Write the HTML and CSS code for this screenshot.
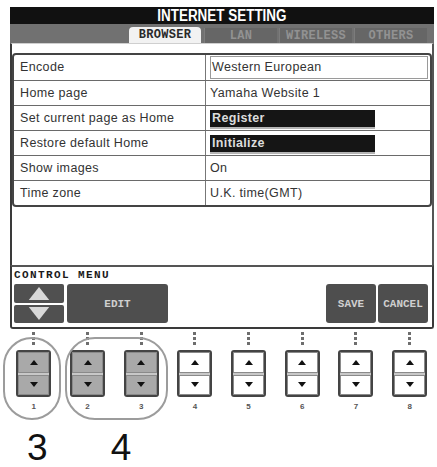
FILE: index.html
```html
<!DOCTYPE html>
<html lang="en">
<head>
    <meta charset="UTF-8">
    <meta name="viewport" content="width=device-width, initial-scale=1.0">
    <title>Internet Setting</title>
    <link rel="stylesheet" href="styles.css">
</head>
<body>
    <div class="screen">
        <div class="title"><span>INTERNET SETTING</span></div>
        <div class="tabs">
            <div class="tab active">BROWSER</div>
            <div class="tab">LAN</div>
            <div class="tab">WIRELESS</div>
            <div class="tab">OTHERS</div>
        </div>
        <div class="content">
            <div class="settings">
                <div class="row">
                    <div class="label">Encode</div>
                    <div class="value"><span class="field">Western European</span></div>
                </div>
                <div class="row">
                    <div class="label">Home page</div>
                    <div class="value">Yamaha Website 1</div>
                </div>
                <div class="row">
                    <div class="label">Set current page as Home</div>
                    <div class="value"><span class="action">Register</span></div>
                </div>
                <div class="row">
                    <div class="label">Restore default Home</div>
                    <div class="value"><span class="action">Initialize</span></div>
                </div>
                <div class="row">
                    <div class="label">Show images</div>
                    <div class="value">On</div>
                </div>
                <div class="row">
                    <div class="label">Time zone</div>
                    <div class="value">U.K. time(GMT)</div>
                </div>
            </div>
        </div>
        <div class="control">
            <div class="control-title">CONTROL MENU</div>
            <div class="control-buttons">
                <div class="updown">
                    <div class="ud-btn">
                        <svg width="22" height="14" viewBox="0 0 22 14"><polygon points="11,0 22,14 0,14" fill="#d8d8d8"/></svg>
                    </div>
                    <div class="ud-btn">
                        <svg width="22" height="14" viewBox="0 0 22 14"><polygon points="0,0 22,0 11,14" fill="#d8d8d8"/></svg>
                    </div>
                </div>
                <div class="cbtn edit">EDIT</div>
                <div class="spacer"></div>
                <div class="cbtn small">SAVE</div>
                <div class="cbtn small">CANCEL</div>
            </div>
        </div>
    </div>

    <div class="panel">
        <div class="oval one"></div>
        <div class="oval two"></div>
        <div class="knobs">
            <div class="knob"><div class="dots"></div><div class="switch on"><div class="half"><i class="tri up"></i></div><div class="half"><i class="tri down"></i></div></div><div class="num">1</div></div>
            <div class="knob"><div class="dots"></div><div class="switch on"><div class="half"><i class="tri up"></i></div><div class="half"><i class="tri down"></i></div></div><div class="num">2</div></div>
            <div class="knob"><div class="dots"></div><div class="switch on"><div class="half"><i class="tri up"></i></div><div class="half"><i class="tri down"></i></div></div><div class="num">3</div></div>
            <div class="knob"><div class="dots"></div><div class="switch"><div class="half"><i class="tri up"></i></div><div class="half"><i class="tri down"></i></div></div><div class="num">4</div></div>
            <div class="knob"><div class="dots"></div><div class="switch"><div class="half"><i class="tri up"></i></div><div class="half"><i class="tri down"></i></div></div><div class="num">5</div></div>
            <div class="knob"><div class="dots"></div><div class="switch"><div class="half"><i class="tri up"></i></div><div class="half"><i class="tri down"></i></div></div><div class="num">6</div></div>
            <div class="knob"><div class="dots"></div><div class="switch"><div class="half"><i class="tri up"></i></div><div class="half"><i class="tri down"></i></div></div><div class="num">7</div></div>
            <div class="knob"><div class="dots"></div><div class="switch"><div class="half"><i class="tri up"></i></div><div class="half"><i class="tri down"></i></div></div><div class="num">8</div></div>
        </div>
        <div class="steps">
            <span class="step first">3</span>
            <span class="step second">4</span>
        </div>
    </div>
</body>
</html>
```

FILE: styles.css
```css
body {
    margin: 0;
    background-color: #ffffff;
    font-family: "Liberation Sans", Arial, sans-serif;
    color: #333333;
}

/* LCD screen */
.screen {
    margin: 7px 0 0 10px;
    width: 424px;
}
.title {
    height: 17px;
    background-color: #111111;
    color: #ffffff;
    text-align: center;
    font-weight: bold;
    font-size: 16px;
    line-height: 18px;
}
.title span {
    display: inline-block;
    transform: scaleX(0.84);
}
.tabs {
    height: 19px;
    background-color: #717171;
    display: flex;
    justify-content: flex-end;
    align-items: flex-end;
    padding-right: 7px;
    gap: 2px;
}
.tab {
    width: 72px;
    height: 15px;
    background-color: #666666;
    color: #929292;
    font-family: "Liberation Mono", monospace;
    font-weight: bold;
    font-size: 12px;
    letter-spacing: 0.3px;
    line-height: 16px;
    text-align: center;
    border-left: 1px solid #7c7c7c;
}
.tab.active {
    background-color: #f2f2f2;
    color: #2a2a2a;
    border-left: none;
    border-radius: 4px 4px 0 0;
    height: 16px;
    margin-right: 1px;
}
.content {
    height: 212px;
    border-left: 2px solid #3a3a3a;
    border-right: 2px solid #555555;
    border-top: 1px solid #cfcfcf;
    padding-top: 9px;
}
.settings {
    border: 2px solid #444444;
    border-radius: 4px;
}
.row {
    display: flex;
    height: 24px;
    border-bottom: 1px solid #6a6a6a;
    font-size: 12.5px;
    letter-spacing: 0.35px;
}
.row:last-child {
    border-bottom: none;
}
.row:first-child {
    height: 25px;
}
.label {
    width: 185px;
    padding-left: 6px;
    line-height: 24px;
    border-right: 1px solid #777777;
}
.value {
    flex: 1;
    padding-left: 4px;
    line-height: 24px;
    display: flex;
    align-items: center;
}
.field {
    flex: 1;
    margin-right: 2px;
    padding-left: 1px;
    height: 21px;
    line-height: 21px;
    border: 1px solid #9a9a9a;
}
.action {
    display: inline-block;
    width: 163px;
    height: 17px;
    line-height: 17px;
    padding-left: 2px;
    background-color: #151515;
    color: #dcdcdc;
    font-weight: bold;
    box-shadow: 0 2px 0 #b5b5b5;
}

/* control menu strip */
.control {
    height: 57px;
    border: 2px solid #3a3a3a;
    border-top: 2px solid #555555;
    border-radius: 0 0 3px 3px;
    padding: 3px 4px 0 2px;
}
.control-title {
    font-family: "Liberation Mono", monospace;
    font-weight: bold;
    font-size: 11px;
    letter-spacing: 1.4px;
    line-height: 11px;
    color: #1a1a1a;
}
.control-buttons {
    display: flex;
    margin-top: 3px;
    height: 39px;
}
.updown {
    width: 50px;
    display: flex;
    flex-direction: column;
    gap: 2px;
}
.ud-btn {
    flex: 1;
    background-color: #505050;
    border-radius: 2px;
    display: flex;
    align-items: center;
    justify-content: center;
}
.ud-btn svg {
    height: 13px;
}
.cbtn {
    background-color: #4e4e4e;
    color: #cfcfcf;
    font-family: "Liberation Mono", monospace;
    font-weight: bold;
    font-size: 11px;
    border-radius: 3px;
    display: flex;
    align-items: center;
    justify-content: center;
}
.edit {
    width: 101px;
    margin-left: 3px;
}
.spacer {
    flex: 1;
}
.small {
    width: 50px;
    margin-left: 2px;
}

/* hardware buttons below the screen */
.panel {
    position: relative;
    padding-left: 7px;
}
.oval {
    position: absolute;
    top: 8px;
    height: 79px;
    border: 2px solid #9c9c9c;
    border-radius: 30px;
}
.oval.one {
    left: 3px;
    width: 54px;
}
.oval.two {
    left: 65px;
    width: 99px;
}
.knobs {
    display: grid;
    grid-template-columns: repeat(8, 53.7px);
    padding-top: 3px;
}
.knob {
    display: flex;
    flex-direction: column;
    align-items: center;
}
.dots {
    width: 0;
    height: 13px;
    border-left: 3px dotted #6e6e6e;
}
.switch {
    margin-top: 5px;
    width: 31px;
    height: 43px;
    border: 2px solid #444444;
    border-radius: 3px;
    display: flex;
    flex-direction: column;
    gap: 2px;
    background-color: #c8c8c8;
}
.half {
    flex: 1;
    background-color: #ffffff;
    box-shadow: inset 0 0 0 1px #8a8a8a;
    display: flex;
    align-items: center;
    justify-content: center;
}
.switch.on .half {
    background-color: #a9a9a9;
}
.tri {
    width: 0;
    height: 0;
    border-left: 4px solid transparent;
    border-right: 4px solid transparent;
}
.tri.up {
    border-bottom: 5px solid #111111;
}
.tri.down {
    border-top: 5px solid #111111;
}
.num {
    margin-top: 5px;
    font-size: 8px;
    font-weight: bold;
    color: #555555;
}
.steps {
    margin-top: 22px;
    height: 30px;
    font-size: 37px;
    color: #111111;
    line-height: 30px;
}
.step.first {
    margin-left: 20px;
}
.step.second {
    margin-left: 53px;
}
```
